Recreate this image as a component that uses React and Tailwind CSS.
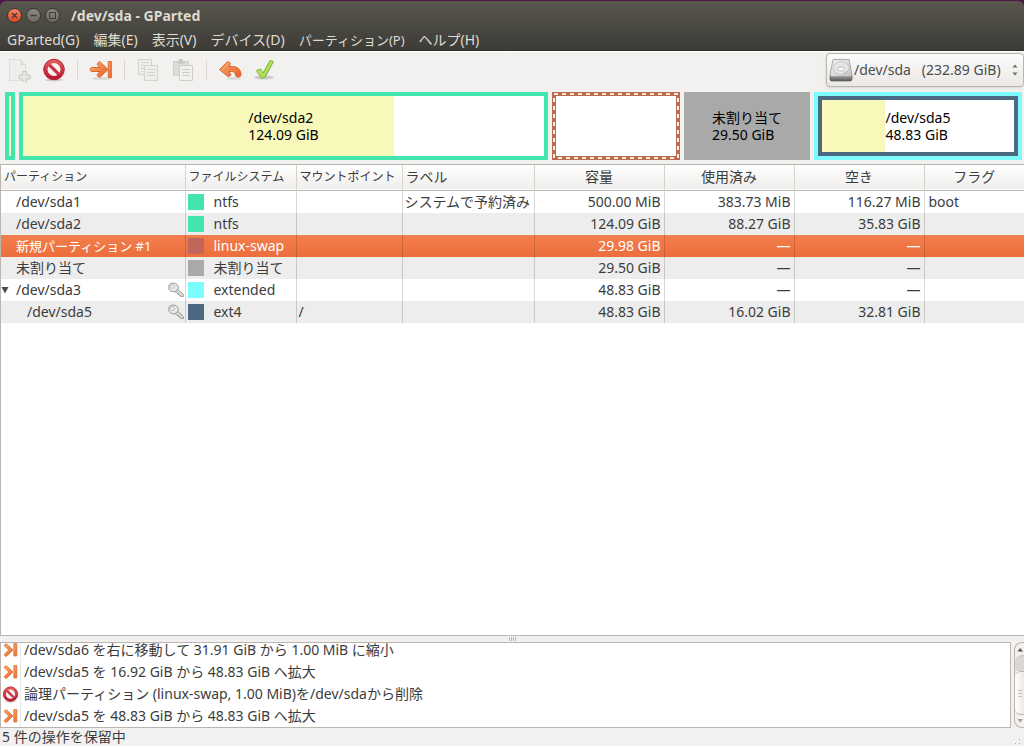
import React, { useState } from "react";

const partitions = [
  { name: "/dev/sda1", fs: "ntfs", color: "#42e5ac", mount: "", label: "システムで予約済み", size: "500.00 MiB", used: "383.73 MiB", free: "116.27 MiB", flags: "boot" },
  { name: "/dev/sda2", fs: "ntfs", color: "#42e5ac", mount: "", label: "", size: "124.09 GiB", used: "88.27 GiB", free: "35.83 GiB", flags: "" },
  { name: "新規パーティション #1", kana: true, fs: "linux-swap", color: "#c1665a", mount: "", label: "", size: "29.98 GiB", used: "—", free: "—", flags: "" },
  { name: "未割り当て", fs: "未割り当て", color: "#a9a9a9", mount: "", label: "", size: "29.50 GiB", used: "—", free: "—", flags: "" },
  { name: "/dev/sda3", fs: "extended", color: "#7dfcfe", mount: "", label: "", size: "48.83 GiB", used: "—", free: "—", flags: "", locked: true, parent: true },
  { name: "/dev/sda5", fs: "ext4", color: "#4b6983", mount: "/", label: "", size: "48.83 GiB", used: "16.02 GiB", free: "32.81 GiB", flags: "", locked: true, child: true },
];

const columns = [
  { title: "パーティション", width: "w-[184px]", kana: true },
  { title: "ファイルシステム", width: "w-[111px]", kana: true },
  { title: "マウントポイント", width: "w-[106px]", kana: true },
  { title: "ラベル", width: "w-[132px]" },
  { title: "容量", width: "w-[130px]", center: true },
  { title: "使用済み", width: "w-[130px]", center: true },
  { title: "空き", width: "w-[130px]", center: true },
  { title: "フラグ", width: "", center: true },
];

const operations = [
  { icon: "resize", text: "/dev/sda6 を右に移動して 31.91 GiB から 1.00 MiB に縮小" },
  { icon: "resize", text: "/dev/sda5 を 16.92 GiB から 48.83 GiB へ拡大" },
  { icon: "delete", text: "論理パーティション (linux-swap, 1.00 MiB)を/dev/sdaから削除" },
  { icon: "resize", text: "/dev/sda5 を 48.83 GiB から 48.83 GiB へ拡大" },
];

const menus = [
  { title: "GParted(G)" },
  { title: "編集(E)" },
  { title: "表示(V)" },
  { title: "デバイス(D)" },
  { title: "パーティション(P)", kana: true },
  { title: "ヘルプ(H)" },
];

function Gradients() {
  return (
    <svg className="absolute h-0 w-0" aria-hidden="true">
      <defs>
        <linearGradient id="orange" x1="0" y1="0" x2="1" y2="1">
          <stop offset="0" stopColor="#f9b070" />
          <stop offset="1" stopColor="#e95c2a" />
        </linearGradient>
        <linearGradient id="red" x1="0" y1="0" x2="0" y2="1">
          <stop offset="0" stopColor="#e8605c" />
          <stop offset="1" stopColor="#b3122c" />
        </linearGradient>
        <linearGradient id="green" x1="0" y1="0" x2="1" y2="1">
          <stop offset="0" stopColor="#d8f07a" />
          <stop offset="1" stopColor="#8fcf45" />
        </linearGradient>
        <linearGradient id="disk" x1="0" y1="0" x2="1" y2="1">
          <stop offset="0" stopColor="#f4f4f4" />
          <stop offset="1" stopColor="#c4c4c4" />
        </linearGradient>
        <linearGradient id="diskSide" x1="0" y1="0" x2="0" y2="1">
          <stop offset="0" stopColor="#a5a5a5" />
          <stop offset="1" stopColor="#555555" />
        </linearGradient>
      </defs>
    </svg>
  );
}

function NewIcon() {
  return (
    <svg viewBox="0 0 24 24" className="h-6 w-6">
      <path d="M2.500 1.500h11l5 5V22.500h-16z" fill="#efeeec" stroke="#dfddda" />
      <path d="M13.500 1.500v5h5" fill="#e6e4e1" stroke="#dfddda" />
      <path d="M15.500 13.500h4v3.500H23v4h-3.500v3h-4v-3H12v-4h3.500z" fill="#e4e7e0" stroke="#c6cac2" />
    </svg>
  );
}

function DeleteIcon({ className = "h-6 w-6" }) {
  return (
    <svg viewBox="0 0 24 24" className={className}>
      <ellipse cx="12" cy="22" rx="9" ry="1.500" fill="#000" opacity=".15" />
      <circle cx="12" cy="11.500" r="10.300" fill="url(#red)" stroke="#b22436" />
      <circle cx="12" cy="11.500" r="6.500" fill="#f4f1ef" />
      <path d="M7.300 6.800l9.400 9.400" stroke="#cc3344" strokeWidth="3.300" />
    </svg>
  );
}

function ResizeIcon() {
  return (
    <svg viewBox="0 0 24 24" className="h-6 w-6">
      <ellipse cx="13" cy="20.500" rx="10" ry="1.500" fill="#000" opacity=".1" />
      <g fill="url(#orange)" stroke="#d9662c" strokeLinejoin="round">
        <path d="M2.500 9.500h8.500L8.500 7c-1-1.500 1.500-4 3-2.800L19 11.500l-7.500 7.300c-1.500 1.200-4-1.200-3-2.600l2.500-2.700H2.500c-1.600 0-1.600-4 0-4z" />
        <path d="M19.300 3.500h3v16h-3z" />
      </g>
    </svg>
  );
}

function SmallResizeIcon() {
  return (
    <svg viewBox="0 0 16 16" className="h-4 w-4">
      <g fill="url(#orange)" stroke="#e07238" strokeLinejoin="round" strokeWidth=".8">
        <path d="M1.500 4.200c-.8-1.500 1.200-3 2.500-2L10 8l-6 6c-1.300 1-3.300-.5-2.500-2L5.800 8z" />
        <path d="M10.800 1.500h3v12.500h-3z" />
      </g>
    </svg>
  );
}

function CopyIcon() {
  return (
    <svg viewBox="0 0 24 24" className="h-6 w-6" fill="#efeeec" stroke="#d5d3d0">
      <path d="M2.500 1.500h13v15h-13z" />
      <path d="M5 4.500h8M5 7.500h8M5 10.500h8M5 13.500h8" />
      <path d="M8.500 7.500h13v15h-13z" />
      <path d="M11 11.500h8M11 14.500h8M11 17.500h8" />
    </svg>
  );
}

function PasteIcon() {
  return (
    <svg viewBox="0 0 24 24" className="h-6 w-6" stroke="#cfcecb">
      <path d="M2.500 3.500h15v14h-15z" fill="#dcdbd8" />
      <path d="M6.500 3.500h1.500v-2h3.500v2H13v2H6.500z" fill="#c4c4c1" />
      <path d="M8.500 7.500h13v15h-13z" fill="#f1f0ee" />
      <path d="M11 11.500h8M11 14.500h8M11 17.500h8" fill="none" />
    </svg>
  );
}

function UndoIcon() {
  return (
    <svg viewBox="0 0 24 24" className="h-6 w-6">
      <ellipse cx="16" cy="20.500" rx="7" ry="1.500" fill="#000" opacity=".1" />
      <path
        d="M1.500 11.500L9 4.200c1.700-1.300 4 .8 3 2.500L11 8.500h3.500c5 0 8.500 3.500 8.500 8 0 3.500-5 3.500-5.500.5-.3-2.500-1.500-3.500-4-3.500H11l1.500 2.200c1 1.800-1.500 3.500-3 2.500z"
        fill="url(#orange)"
        stroke="#d9662c"
        strokeLinejoin="round"
      />
    </svg>
  );
}

function ApplyIcon() {
  return (
    <svg viewBox="0 0 24 24" className="h-6 w-6">
      <ellipse cx="11" cy="19.500" rx="10" ry="2" fill="#000" opacity=".15" />
      <path d="M3.500 12.500l4-1.500 2.500 4L17 2.500l3.500 1L12 19.500l-3.500 1z" fill="url(#green)" stroke="#7fb43c" strokeLinejoin="round" />
    </svg>
  );
}

function DiskIcon() {
  return (
    <svg viewBox="0 0 24 24" className="h-6 w-6">
      <path d="M1 17.500h22v4l-1 1.500H2l-1-1.500z" fill="url(#diskSide)" stroke="#5c5c5c" strokeWidth=".7" />
      <path d="M4 1.500h16l3 15.500-1 1.500H2L1 17z" fill="url(#disk)" stroke="#989898" strokeWidth=".8" />
      <ellipse cx="12" cy="10" rx="8" ry="6.500" fill="#e4e4e4" stroke="#c5c5c5" strokeWidth=".8" />
      <ellipse cx="12" cy="11" rx="3.500" ry="2" fill="#f8f8f8" stroke="#b5b5b5" strokeWidth=".8" />
      <path d="M19 13l-5 3.500" stroke="#b0b0b0" />
    </svg>
  );
}

function KeyIcon() {
  return (
    <svg viewBox="0 0 16 16" className="h-4 w-4 shrink-0">
      <path d="M8.500 6l7 6.500v2h-2.800L12 13h-1.500v-1.500H9L6.500 9z" fill="#d8d8d5" stroke="#8f8f8c" strokeWidth=".8" />
      <path d="M5.300 1C8 1 10.300 3 10.300 5.300S8.300 9.800 5.500 9.800.6 8 .6 5.300 2.500 1 5.300 1z" fill="#e9e9e6" stroke="#8f8f8c" strokeWidth=".9" />
      <ellipse cx="4.300" cy="4.500" rx="2" ry="1.700" fill="#fff" stroke="#a0a09d" strokeWidth=".8" />
    </svg>
  );
}

function WindowButton({ label, close, children }) {
  return (
    <button
      aria-label={label}
      className={`flex h-[15px] w-[15px] items-center justify-center rounded-full border border-[#353430] ${
        close ? "bg-linear-to-b from-[#f58561] to-[#dc4719]" : "bg-linear-to-b from-[#8b887f] to-[#6a6861]"
      }`}
    >
      <svg viewBox="0 0 9 9" className="h-[9px] w-[9px]" fill="none" stroke="#3b3a36">
        {children}
      </svg>
    </button>
  );
}

function TitleBar() {
  return (
    <div className="flex h-[29px] items-center gap-1 px-[7px]">
      <WindowButton label="閉じる" close>
        <path d="M2 2l5 5M7 2L2 7" strokeWidth="1.300" />
      </WindowButton>
      <WindowButton label="最小化">
        <path d="M1.500 4.500h6" strokeWidth="1.300" />
      </WindowButton>
      <WindowButton label="最大化">
        <path d="M1.500 1.500h6v6h-6z" />
      </WindowButton>
      <h1 className="ml-[7px] text-sm font-bold text-[#dfdbd2]">/dev/sda - GParted</h1>
    </div>
  );
}

function Separator() {
  return <div className="h-5 w-px bg-[#d9d6d2]" />;
}

function Toolbar() {
  return (
    <div className="flex h-9 items-center justify-between border-t border-white pl-[7px]">
      <div className="flex items-center gap-[11px]">
        <button aria-label="新規" disabled><NewIcon /></button>
        <button aria-label="削除"><DeleteIcon /></button>
        <Separator />
        <button aria-label="リサイズ/移動"><ResizeIcon /></button>
        <Separator />
        <button aria-label="コピー" disabled><CopyIcon /></button>
        <button aria-label="貼り付け" disabled><PasteIcon /></button>
        <Separator />
        <button aria-label="元に戻す"><UndoIcon /></button>
        <button aria-label="適用"><ApplyIcon /></button>
      </div>
      <label className="flex h-[34px] w-[198px] items-center rounded-[4px] border border-[#b9b5b0] bg-linear-to-b from-[#fbfbfa] to-[#ebe9e7] pr-1 pl-[2px] shadow-sm">
        <DiskIcon />
        <select aria-label="デバイス" className="min-w-0 flex-1 appearance-none bg-transparent pl-px text-sm text-[#4c4c4c] outline-none">
          <option>{"/dev/sda\u00a0\u00a0\u00a0(232.89 GiB)"}</option>
        </select>
        <svg viewBox="0 0 8 14" className="h-[14px] w-2" fill="#6b6965">
          <path d="M1.500 4.500h5L4 1.500zM1.500 9.500h5L4 12.500z" />
        </svg>
      </label>
    </div>
  );
}

function BlockLabel({ name, size }) {
  return (
    <div className="relative text-sm leading-[17px] text-black">
      <p>{name}</p>
      <p>{size}</p>
    </div>
  );
}

function DiskMap() {
  return (
    <div className="flex h-[77px] gap-1 pt-[5px] pr-[2px] pb-1 pl-[5px]">
      <div className="w-[10px] border-4 border-[#42e5ac] bg-[#f8f8ba]" />
      <div className="relative flex flex-[521] items-center justify-center border-4 border-[#42e5ac] bg-white">
        <div className="absolute inset-y-0 left-0 bg-[#f8f8ba]" style={{ width: `${(88.27 / 124.09) * 100}%` }} />
        <BlockLabel name="/dev/sda2" size="124.09 GiB" />
      </div>
      <div className="relative flex-[120] border-4 border-[#c1665a] bg-white">
        <svg className="absolute -top-[2px] -left-[2px] h-[calc(100%+4px)] w-[calc(100%+4px)] overflow-visible">
          <rect width="100%" height="100%" fill="none" stroke="#f8f8ba" strokeWidth="2" strokeDasharray="4 4" />
        </svg>
      </div>
      <div className="flex flex-[126] items-center justify-center bg-[#a9a9a9]">
        <BlockLabel name="未割り当て" size="29.50 GiB" />
      </div>
      <div className="flex flex-[200] border-4 border-[#7dfcfe]">
        <div className="relative flex flex-1 items-center justify-center border-4 border-[#4b6983] bg-white">
          <div className="absolute inset-y-0 left-0 bg-[#f8f8ba]" style={{ width: `${(16.02 / 48.83) * 100}%` }} />
          <BlockLabel name="/dev/sda5" size="48.83 GiB" />
        </div>
      </div>
    </div>
  );
}

function PartitionRow({ partition, index, selected, onSelect }) {
  const background = selected
    ? "bg-linear-to-b from-[#f37e4e] to-[#ec6e3b] text-white"
    : index % 2
      ? "bg-[#ededed]"
      : "bg-white";
  const cell = "border-r border-black/15 p-0 pr-[3px] pl-[2px] whitespace-nowrap";

  return (
    <tr onClick={onSelect} className={`h-[22px] ${background}`}>
      <td className="border-r border-black/15 p-0 pr-px pl-[3px] whitespace-nowrap">
        <div className="flex items-center">
          <span className="w-3 shrink-0">
            {partition.parent ? (
              <svg viewBox="0 0 8 8" className="-ml-[3px] h-2 w-2">
                <path d="M.5 1h7L4 7.500z" fill="#4c4c4c" />
              </svg>
            ) : null}
          </span>
          <span className={`flex-1 ${partition.child ? "pl-[11px]" : ""} ${partition.kana ? "text-[13px]" : ""}`}>
            {partition.name}
          </span>
          {partition.locked ? <KeyIcon /> : null}
        </div>
      </td>
      <td className={cell}>
        <div className="flex items-center gap-[10px]">
          <span className="h-4 w-4 shrink-0" style={{ backgroundColor: partition.color }} />
          {partition.fs}
        </div>
      </td>
      <td className={cell}>{partition.mount}</td>
      <td className={cell}>{partition.label}</td>
      <td className={`${cell} text-right`}>{partition.size}</td>
      <td className={`${cell} text-right`}>{partition.used}</td>
      <td className={`${cell} text-right`}>{partition.free}</td>
      <td className="p-0 px-1">{partition.flags}</td>
    </tr>
  );
}

function PartitionTable() {
  const [selected, setSelected] = useState(2);

  return (
    <div className="flex-1 border border-r-0 border-[#bab5b0] bg-white">
      <table className="w-full table-fixed border-collapse text-sm leading-[22px]">
        <thead>
          <tr className="h-[25px] border-b border-[#bab5b0] bg-linear-to-b from-white to-[#efeeec]">
            {columns.map((column) => (
              <th
                key={column.title}
                className={`border-r border-[#d5d2ce] p-0 px-[3px] font-normal whitespace-nowrap last:border-r-0 ${column.width} ${
                  column.center ? "text-center" : "text-left"
                } ${column.kana ? "text-xs" : ""}`}
              >
                {column.title}
              </th>
            ))}
          </tr>
        </thead>
        <tbody>
          {partitions.map((partition, index) => (
            <PartitionRow
              key={partition.name}
              partition={partition}
              index={index}
              selected={index === selected}
              onSelect={() => setSelected(index)}
            />
          ))}
        </tbody>
      </table>
    </div>
  );
}

function OperationList() {
  return (
    <div className="flex h-[86px] gap-[3px]">
      <ul className="flex flex-1 flex-col justify-end overflow-hidden border border-[#bab5b0] bg-white text-sm leading-none">
        {operations.map((operation, index) => (
          <li key={index} className="flex h-[22px] shrink-0 items-center">
            <span className="flex h-full w-5 items-center justify-center border-r border-[#ebebeb]">
              {operation.icon === "delete" ? <DeleteIcon className="h-[17px] w-[17px]" /> : <SmallResizeIcon />}
            </span>
            <span className="pl-[3px] whitespace-nowrap">{operation.text}</span>
          </li>
        ))}
      </ul>
      <div className="flex w-[10px] flex-col items-center rounded-l-lg border border-r-0 border-[#bab5b0] bg-[#f2f1f0]">
        <svg viewBox="0 0 8 12" className="h-3 w-2">
          <path d="M1.500 8.500h5.500L4.200 5z" fill="#55534f" />
        </svg>
        <div className="h-4 w-full rounded-tl-lg border-t border-[#c6c2be] bg-[#dad8d5]" />
        <div className="flex w-full flex-1 flex-col items-center justify-center gap-[2px] rounded-l-md border-y border-[#bab5b0] bg-linear-to-r from-white to-[#eceae8]">
          <span className="h-px w-1 bg-[#c3bfba]" />
          <span className="h-px w-1 bg-[#c3bfba]" />
          <span className="h-px w-1 bg-[#c3bfba]" />
        </div>
        <svg viewBox="0 0 8 12" className="h-3 w-2">
          <path d="M1.500 4h5.500L4.200 7.500z" fill="#a5a29d" />
        </svg>
      </div>
    </div>
  );
}

export default function App() {
  return (
    <div className="flex min-h-screen flex-col bg-[#4f1748] font-['Noto_Sans','Noto_Sans_CJK_JP',sans-serif] text-[#3c3c3c]">
      <Gradients />
      <header className="mt-px rounded-t-md border-b border-[#2f2e2a] bg-linear-to-b from-[#59574e] to-[#3c3b37]">
        <TitleBar />
        <nav className="flex h-5 items-center gap-[14px] px-[7px] text-sm text-[#dfdbd2]">
          {menus.map((menu) => (
            <button key={menu.title} className={`leading-5 whitespace-nowrap ${menu.kana ? "text-[13px]" : ""}`}>
              {menu.title}
            </button>
          ))}
        </nav>
      </header>
      <main className="flex flex-1 flex-col bg-[#f2f1f0]">
        <Toolbar />
        <DiskMap />
        <PartitionTable />
        <div className="flex h-[6px] items-center justify-center gap-px">
          <span className="h-1 w-px bg-[#b9b5b0]" />
          <span className="h-1 w-px bg-[#b9b5b0]" />
          <span className="h-1 w-px bg-[#b9b5b0]" />
          <span className="h-1 w-px bg-[#b9b5b0]" />
        </div>
        <OperationList />
        <footer className="flex h-[18px] items-center justify-between px-[2px] text-sm leading-[18px]">
          <span>5 件の操作を保留中</span>
          <svg viewBox="0 0 8 8" className="h-2 w-2 self-end" fill="#aaa6a1">
            <path d="M5 1h1v1H5zM5 5h1v1H5zM1 5h1v1H1z" />
          </svg>
        </footer>
      </main>
    </div>
  );
}
